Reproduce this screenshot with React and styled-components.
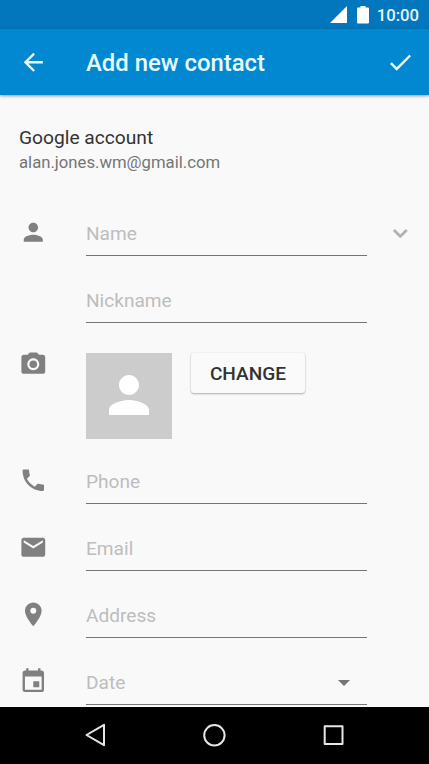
import styled, { createGlobalStyle } from 'styled-components'
import {
  MdArrowBack,
  MdCheck,
  MdPerson,
  MdExpandMore,
  MdPhotoCamera,
  MdPhone,
  MdEmail,
  MdPlace,
  MdEvent,
} from 'react-icons/md'

const details = [
  { icon: MdPhone, label: 'Phone' },
  { icon: MdEmail, label: 'Email' },
  { icon: MdPlace, label: 'Address' },
  { icon: MdEvent, label: 'Date', select: true },
]

function StatusBar() {
  return (
    <Status>
      <svg width="17" height="17" viewBox="0 0 17 17">
        <path d="M17 0v17H0z" fill="#fff" />
      </svg>
      <svg width="12" height="18" viewBox="0 0 12 18">
        <path d="M3.5 0h5v1.500H11q1 0 1 1v14q0 1-1 1H1q-1 0-1-1v-14q0-1 1-1h2.500z" fill="#fff" />
      </svg>
      <Clock>10:00</Clock>
    </Status>
  )
}

function NavBar() {
  return (
    <Nav>
      <svg width="24" height="24" viewBox="0 0 24 24">
        <path d="M21 1.800v20.400L3.500 12z" />
      </svg>
      <svg width="24" height="24" viewBox="0 0 24 24">
        <circle cx="12.400" cy="12.300" r="10.200" />
      </svg>
      <svg width="24" height="24" viewBox="0 0 24 24">
        <rect x="3.700" y="3.200" width="17.800" height="17.800" />
      </svg>
    </Nav>
  )
}

function App() {
  return (
    <Screen>
      <GlobalStyle />
      <StatusBar />

      <AppBar>
        <MdArrowBack />
        <Title>Add new contact</Title>
        <MdCheck />
      </AppBar>

      <Content>
        <Account>
          <h2>Google account</h2>
          <p>alan.jones.wm@gmail.com</p>
        </Account>

        <Row>
          <MdPerson />
          <Field>Name</Field>
          <Expand />
        </Row>
        <Row>
          <Field>Nickname</Field>
        </Row>

        <PhotoRow>
          <MdPhotoCamera />
          <Avatar>
            <MdPerson />
          </Avatar>
          <Button>CHANGE</Button>
        </PhotoRow>

        {details.map(({ icon: Icon, label, select }) => (
          <Row key={label}>
            <Icon />
            <Field>
              {label}
              {select && <Caret />}
            </Field>
          </Row>
        ))}
      </Content>

      <NavBar />
    </Screen>
  )
}

const GlobalStyle = createGlobalStyle`
  * {
    box-sizing: border-box;
  }
  body {
    margin: 0;
    background: #f9f9f9;
    font-family: Roboto, sans-serif;
  }
  h1, h2, p {
    margin: 0;
  }
`

const Screen = styled.div`
  display: flex;
  flex-direction: column;
  width: 429px;
  height: 764px;
  overflow: hidden;
  background: #f9f9f9;
`

const Status = styled.div`
  display: flex;
  align-items: center;
  justify-content: flex-end;
  flex: none;
  height: 28.600px;
  padding: 1px 10px 0 0;
  background: #0277bd;

  svg {
    margin-right: 9.500px;
  }
  svg + svg {
    margin-right: 8px;
  }
`

const Clock = styled.span`
  padding-top: 2px;
  color: #e8f4fb;
  font-size: 16.700px;
  font-weight: 500;
  line-height: 20px;
`

const AppBar = styled.header`
  display: flex;
  align-items: center;
  flex: none;
  height: 66.700px;
  padding: 0 14px 0 19px;
  background: #0288d1;
  box-shadow: 0 1px 3px rgba(0, 0, 0, 0.4);
  color: #e8fbff;
  z-index: 1;

  svg {
    width: 28.600px;
    height: 28.600px;
  }
`

const Title = styled.h1`
  flex: 1;
  padding: 2px 0 0 38.400px;
  font-size: 23.900px;
  font-weight: 500;
  line-height: 28px;
`

const Content = styled.main`
  flex: 1;
  min-height: 0;
  overflow: hidden;
  padding: 31px 0 0 19px;
`

const Account = styled.section`
  height: 62.700px;

  h2 {
    color: #333;
    font-size: 19.200px;
    font-weight: 400;
    line-height: 24px;
  }
  p {
    color: #757575;
    font-size: 16.700px;
    line-height: 25px;
  }
`

const Row = styled.div`
  display: grid;
  grid-template-columns: 67px 281px 1fr;
  height: 67px;

  > svg {
    width: 28.600px;
    height: 28.600px;
    margin-top: 29px;
    color: #808080;
  }
`

const Field = styled.div`
  grid-column: 2;
  display: flex;
  align-items: center;
  justify-content: space-between;
  padding: 23.800px 17.500px 0 0;
  border-bottom: 1px solid #757575;
  color: #bdbdbd;
  font-size: 19.100px;
  line-height: 24px;
`

const Expand = styled(MdExpandMore)`
  && {
    margin: 30.500px 0 0 19.300px;
    color: #b0b0b0;
  }

  path:last-child {
    stroke: #b0b0b0;
    stroke-width: 0.4px;
  }
`

const Caret = styled.span`
  border: 6px solid transparent;
  border-top: 6px solid #757575;
  border-bottom: 0;
`

const PhotoRow = styled.div`
  display: grid;
  grid-template-columns: 67px 105px auto 1fr;
  align-items: start;
  height: 114.500px;
  padding-top: 29.700px;

  > svg {
    width: 28.600px;
    height: 28.600px;
    margin-top: -3px;
    color: #808080;
  }
`

const Avatar = styled.div`
  display: grid;
  place-items: center;
  width: 86px;
  height: 86px;
  padding: 0 1px 2px 0;
  background: #ccc;

  svg {
    width: 60px;
    height: 60px;
    color: #fff;
  }
`

const Button = styled.button`
  width: 114px;
  height: 40.500px;
  padding: 2px 0 0;
  border: 0;
  border-radius: 2.400px;
  background: #fafafa;
  box-shadow: 0 1px 2px rgba(0, 0, 0, 0.3), 0 0 1px rgba(0, 0, 0, 0.15);
  color: #333;
  font: 500 19.100px Roboto, sans-serif;
`

const Nav = styled.nav`
  display: flex;
  align-items: center;
  justify-content: center;
  gap: 95.200px;
  flex: none;
  height: 57.200px;
  padding-right: 1px;
  background: #000;

  svg {
    fill: none;
    stroke: #e6e6e6;
    stroke-width: 2;
    stroke-linejoin: round;
  }
`

export default App
